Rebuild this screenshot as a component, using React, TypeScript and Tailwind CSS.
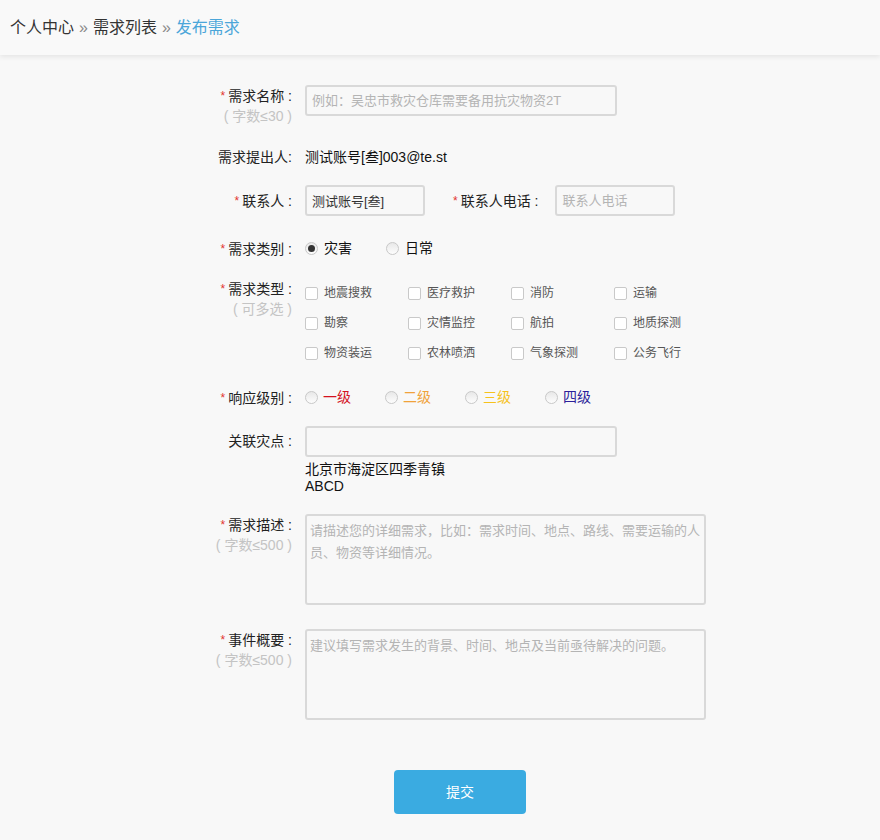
import type { ReactNode } from 'react';

const font = { fontFamily: '"Liberation Sans", "Noto Sans CJK SC", sans-serif' };

function Star() {
  return <span className="text-[#e2342f] text-[12px] mr-[3px] align-top">*</span>;
}

function Label({ children, req, sub, className = '' }: { children: ReactNode; req?: boolean; sub?: string; className?: string }) {
  return (
    <div className={`w-[92px] shrink-0 text-right text-[14px] leading-[20px] text-[#222] ${className}`}>
      <div>
        {req && <Star />}
        {children}
      </div>
      {sub && <div className="text-[#c4c4c4] whitespace-pre">{sub}</div>}
    </div>
  );
}

function Radio({ checked }: { checked?: boolean }) {
  return (
    <span className="w-[13px] h-[13px] rounded-full border border-[#c8c8c8] bg-gradient-to-b from-[#e8e8e8] to-[#fdfdfd] flex items-center justify-center shrink-0">
      {checked && <span className="w-[7px] h-[7px] rounded-full bg-[#333]" />}
    </span>
  );
}

function Checkbox({ label }: { label: string }) {
  return (
    <div className="flex items-center h-[30px] gap-[6px]">
      <span className="w-[13px] h-[13px] rounded-[2px] border border-[#c9c9c9] bg-white shrink-0" />
      <span className="text-[12px] text-[#555]">{label}</span>
    </div>
  );
}

const inputCls =
  'h-[31px] border-2 border-[#d9d9d9] rounded-[3px] bg-[#f8f8f8] px-[5px] text-[13px] text-[#333] placeholder:text-[#b4b4b4] outline-none';

const textareaCls =
  'w-[401px] h-[91px] border-2 border-[#d9d9d9] rounded-[3px] bg-[#f8f8f8] px-[3px] py-[4px] text-[13px] leading-[22px] text-[#333] placeholder:text-[#b4b4b4] outline-none resize-none';

const types = ['地震搜救', '医疗救护', '消防', '运输', '勘察', '灾情监控', '航拍', '地质探测', '物资装运', '农林喷洒', '气象探测', '公务飞行'];

const levels = [
  { t: '一级', c: 'text-[#d4121f]' },
  { t: '二级', c: 'text-[#f0a23a]' },
  { t: '三级', c: 'text-[#f6c21c]' },
  { t: '四级', c: 'text-[#2c1f9a]' },
];

export default function App() {
  return (
    <div className="min-h-[840px] bg-[#f8f8f8]" style={font}>
      <div className="h-[55px] bg-[#f9f9f9] shadow-[0_2px_5px_rgba(0,0,0,0.08)] flex items-center px-[10px] text-[16px]">
        <span className="text-[#333]">个人中心</span>
        <span className="text-[#8a8a8a] mx-[5px]">»</span>
        <span className="text-[#333]">需求列表</span>
        <span className="text-[#8a8a8a] mx-[5px]">»</span>
        <span className="text-[#4ba6d9]">发布需求</span>
      </div>

      <div className="ml-[200px] flex flex-col pb-[26px]">
        <div className="flex gap-[13px] mt-[30px]">
          <Label req sub="( 字数≤30 )" className="pt-[1px]">需求名称 :</Label>
          <input className={`${inputCls} w-[312px]`} placeholder="例如：吴忠市救灾仓库需要备用抗灾物资2T" />
        </div>

        <div className="flex gap-[13px] mt-[21px] items-center">
          <Label>需求提出人:</Label>
          <span className="text-[14px] leading-[20px] text-[#111]">测试账号[叁]003@te.st</span>
        </div>

        <div className="flex gap-[13px] mt-[18px] items-center">
          <Label req>联系人 :</Label>
          <input className={`${inputCls} w-[120px]`} defaultValue="测试账号[叁]" />
          <div className="ml-[15px] text-[14px] leading-[20px] text-[#222]">
            <Star />
            联系人电话 :
          </div>
          <input className={`${inputCls} w-[120px] ml-[4px]`} placeholder="联系人电话" />
        </div>

        <div className="flex gap-[13px] mt-[22px] items-center">
          <Label req>需求类别 :</Label>
          <div className="flex items-center text-[14px] text-[#111]">
            <Radio checked />
            <span className="ml-[6px]">灾害</span>
            <span className="ml-[34px]"><Radio /></span>
            <span className="ml-[6px]">日常</span>
          </div>
        </div>

        <div className="flex gap-[13px] mt-[20px]">
          <Label req sub="( 可多选 )">需求类型 :</Label>
          <div className="grid grid-cols-[103px_103px_103px_103px] -mt-[1px]">
            {types.map((t) => (
              <Checkbox key={t} label={t} />
            ))}
          </div>
        </div>

        <div className="flex gap-[13px] mt-[19px] items-center">
          <Label req>响应级别 :</Label>
          <div className="flex items-center gap-[34px] text-[14px]">
            {levels.map((l) => (
              <div key={l.t} className="flex items-center gap-[5px]">
                <Radio />
                <span className={l.c}>{l.t}</span>
              </div>
            ))}
          </div>
        </div>

        <div className="flex gap-[13px] mt-[18px]">
          <Label className="pt-[5px]">关联灾点 :</Label>
          <div className="flex flex-col">
            <input className={`${inputCls} w-[312px]`} />
            <div className="mt-[4px] text-[14px] leading-[17px] text-[#111]">
              <div>北京市海淀区四季青镇</div>
              <div>ABCD</div>
            </div>
          </div>
        </div>

        <div className="flex gap-[13px] mt-[19px]">
          <Label req sub="( 字数≤500 )" className="pt-[1px]">需求描述 :</Label>
          <textarea
            className={textareaCls}
            placeholder="请描述您的详细需求，比如：需求时间、地点、路线、需要运输的人员、物资等详细情况。"
          />
        </div>

        <div className="flex gap-[13px] mt-[24px]">
          <Label req sub="( 字数≤500 )" className="pt-[1px]">事件概要 :</Label>
          <textarea className={textareaCls} placeholder="建议填写需求发生的背景、时间、地点及当前亟待解决的问题。" />
        </div>

        <button className="mt-[50px] ml-[194px] w-[132px] h-[44px] rounded-[4px] bg-[#3aabe1] text-white text-[14px]">
          提交
        </button>
      </div>
    </div>
  );
}
